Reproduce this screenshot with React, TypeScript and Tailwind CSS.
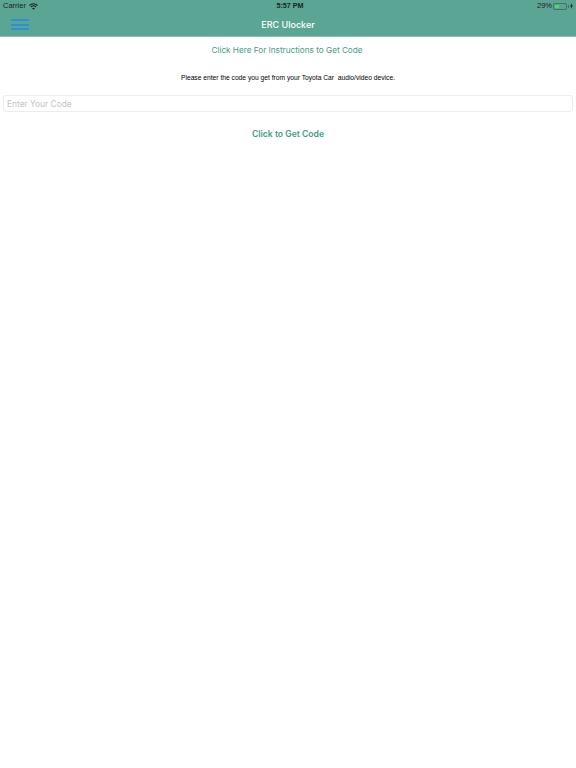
export default function App() {
  return (
    <div className="w-[576px] h-[768px] bg-white flex flex-col font-['Inter','Liberation_Sans',sans-serif] overflow-hidden">
      <header className="h-[37px] bg-[#5ba594] border-b border-[#8fc0b4] flex flex-col shrink-0">
        <div className="h-3 flex items-center justify-between leading-3 text-[#222] pl-[3px] pr-[3px] font-['Liberation_Sans',sans-serif]">
          <div className="flex-1 flex items-center gap-[3px]">
            <span className="text-[7.5px]">Carrier</span>
            <svg width="9" height="7" viewBox="0 0 18 14" fill="none" stroke="#222" strokeWidth="2.2">
              <path d="M1 5 C5.5 0.4 12.5 0.4 17 5" />
              <path d="M4 8 C7 5 11 5 14 8" />
              <path d="M9 13.5 L6 10.5 C7.8 9 10.2 9 12 10.5 Z" fill="#222" stroke="none" />
            </svg>
          </div>
          <span className="font-bold text-[7.2px] text-center ml-[4px]">5:57 PM</span>
          <div className="flex-1 flex items-center justify-end gap-[1px]">
            <span className="text-[7.5px]">29%</span>
            <div className="w-[14px] h-[7px] border border-[#4a6f66] rounded-[2px] p-[1px] flex">
              <div className="w-[4px] bg-[#4cd964]" />
            </div>
            <div className="w-[1px] h-[3px] bg-[#4a6f66]" />
            <svg width="3" height="6" viewBox="0 0 6 12">
              <path d="M4 0 L0 7 H2.5 L2 12 L6 5 H3.5 Z" fill="#222" />
            </svg>
          </div>
        </div>
        <div className="flex-1 relative flex items-center justify-center">
          <div className="absolute left-[11px] top-[7px] w-[18px] flex flex-col gap-[2.5px]">
            <div className="h-[2px] bg-[#2f8fd0]" />
            <div className="h-[2px] bg-[#2f8fd0]" />
            <div className="h-[2px] bg-[#2f8fd0]" />
          </div>
          <span className="text-[9px] font-medium text-white leading-none">ERC Ulocker</span>
        </div>
      </header>
      <main className="flex flex-col items-center">
        <a className="mt-[7px] text-[#3f9c88] text-[8.2px] leading-[13px] ml-[-2px]">Click Here For Instructions to Get Code</a>
        <p className="mt-[16px] text-black text-[6.7px] leading-[10px] whitespace-pre font-['Liberation_Sans',sans-serif]">Please enter the code you get from your Toyota Car  audio/video device.</p>
        <div className="mt-[12px] w-[570px] h-[17px] border border-[#ececec] rounded-[3px] px-[3px] pt-[1px] flex items-center text-[8.4px] text-[#c4c4c4]">Enter Your Code</div>
        <button className="mt-[15px] text-[#3f9c88] text-[8.6px] leading-[14px] font-semibold">Click to Get Code</button>
      </main>
    </div>
  );
}
